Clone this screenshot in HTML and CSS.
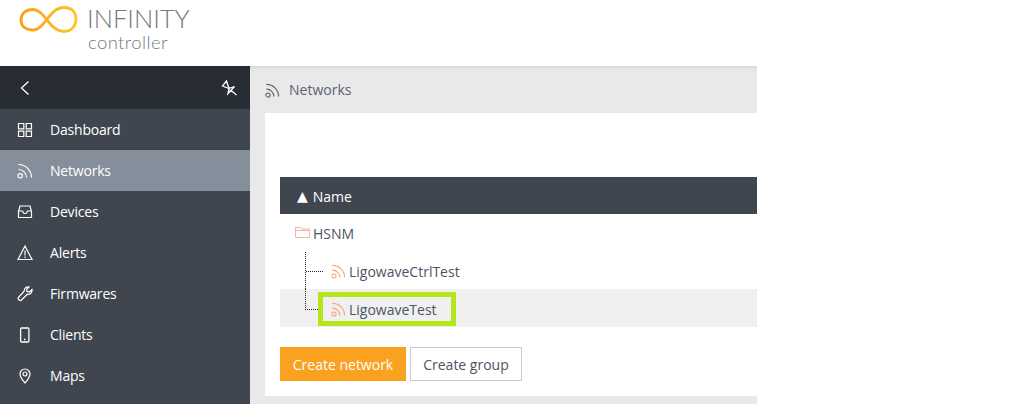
FILE: index.html
```html
<!DOCTYPE html>
<html lang="en">
<head>
<meta charset="utf-8">
<title>Infinity controller</title>
<link rel="stylesheet" href="styles.css">
</head>
<body>
<svg class="defs" width="0" height="0" aria-hidden="true">
  <defs>
    <symbol id="rss" viewBox="0 0 16 16">
      <circle cx="3.200" cy="12.800" r="2.200" fill="none" stroke="currentColor" stroke-width="1.200"/>
      <path d="M1.500 6.500A8 8 0 0 1 9.500 14.500M1.500 1.500A13 13 0 0 1 14.500 14.500" fill="none" stroke="currentColor" stroke-width="1.200"/>
    </symbol>
  </defs>
</svg>
<header class="topbar">
  <svg class="logo-mark" width="60" height="28" viewBox="0 0 60 28">
    <defs>
      <linearGradient id="lg" x1="0" x2="1" y1="0" y2="0">
        <stop offset="0" stop-color="#f8a01e"/>
        <stop offset="1" stop-color="#fdc62c"/>
      </linearGradient>
    </defs>
    <path d="M14 4.500C6 4.500 2 9 2 15S6 25 14 25C26 25 30 2.500 45 2.500C53 2.500 57 7.500 57 14S53 26.500 45 26.500C30 26.500 26 4.500 14 4.500Z" fill="none" stroke="url(#lg)" stroke-width="2.800"/>
  </svg>
  <div class="brand">
    <div class="brand-name">INFINITY</div>
    <div class="brand-sub">controller</div>
  </div>
</header>
<div class="app">
  <nav class="sidebar">
    <div class="side-head">
      <svg width="12" height="16" viewBox="0 0 12 16"><path d="M9.500 1.500 2.500 8l7 6.500" fill="none" stroke="#fff" stroke-width="1.300"/></svg>
      <svg width="16" height="16" viewBox="0 0 16 16"><path d="M5.500 1 1.500 6 8 8.500ZM8 8.500 7 13.500 13.500 6.500ZM9.500 10 15.500 15" fill="none" stroke="#fff" stroke-width="1.300"/></svg>
    </div>
    <a class="nav-item">
      <svg class="nav-icon" width="16" height="16" viewBox="0 0 16 16"><path d="M1.500 1.500h5.300v5.300H1.500zM9.200 1.500h5.300v5.300H9.200zM1.500 9.200h5.300v5.300H1.500zM9.200 9.200h5.300v5.300H9.200z" fill="none" stroke="#fff" stroke-width="1.200"/></svg>
      <span>Dashboard</span>
    </a>
    <a class="nav-item active">
      <svg class="nav-icon" width="16" height="16"><use href="#rss"/></svg>
      <span>Networks</span>
    </a>
    <a class="nav-item">
      <svg class="nav-icon" width="16" height="16" viewBox="0 0 16 16"><path d="M1.500 7.500 3 2h10l1.500 5.500v6h-13ZM1.500 7h4l1.500 2.500h2L10.500 7h4" fill="none" stroke="#fff" stroke-width="1.200"/></svg>
      <span>Devices</span>
    </a>
    <a class="nav-item">
      <svg class="nav-icon" width="16" height="16" viewBox="0 0 16 16"><path d="M8 1 15 14.500H1ZM8 5.500v5M8 11.500v1.500" fill="none" stroke="#fff" stroke-width="1.200"/></svg>
      <span>Alerts</span>
    </a>
    <a class="nav-item">
      <svg class="nav-icon" width="16" height="16" viewBox="0 0 16 16"><path d="M15 3.500 12.300 6 10 5.400 9.500 3.200 12 1C9.500.3 7 2 7.200 5.200L1.400 11.500C.4 12.800 2.800 15.300 4.200 14.200L10.300 8.200C13 8.800 15.500 6.500 15 3.500Z" fill="none" stroke="#fff" stroke-width="1.200"/></svg>
      <span>Firmwares</span>
    </a>
    <a class="nav-item">
      <svg class="nav-icon" width="16" height="16" viewBox="0 0 16 16"><rect x="3.600" y="1" width="8.300" height="14" rx="1" fill="none" stroke="#fff" stroke-width="1.300"/><path d="M7.000 12.500h1.500" stroke="#fff" stroke-width="1.300"/></svg>
      <span>Clients</span>
    </a>
    <a class="nav-item">
      <svg class="nav-icon" width="16" height="16" viewBox="0 0 16 16"><path d="M8 15C5.500 11.800 3 9.500 3 6A5 5 0 0 1 13 6C13 9.500 10.500 11.800 8 15Z" fill="none" stroke="#fff" stroke-width="1.200"/><circle cx="8" cy="6" r="2" fill="none" stroke="#fff" stroke-width="1.200"/></svg>
      <span>Maps</span>
    </a>
  </nav>
  <main class="content">
    <div class="crumb">
      <svg class="crumb-icon" width="15" height="15"><use href="#rss"/></svg>
      <span>Networks</span>
    </div>
    <section class="card">
      <div class="table-head"><span class="sort-mark">▲</span><span>Name</span></div>
      <div class="row row-group">
        <svg class="folder" width="15" height="13" viewBox="0 0 15 13"><path d="M.5 11.500V1.500h5l1.200 1.500h7.800v8.500ZM.5 4.500h14" fill="none" stroke="#f7b39b" stroke-width="1"/></svg>
        <span>HSNM</span>
      </div>
      <div class="row row-child">
        <span class="branch branch-first"></span>
        <span class="label">
          <svg class="net-icon" width="15" height="15"><use href="#rss"/></svg>
          <span>LigowaveCtrlTest</span>
        </span>
      </div>
      <div class="row row-child row-selected">
        <span class="branch branch-last"></span>
        <span class="label label-marked">
          <svg class="net-icon" width="15" height="15"><use href="#rss"/></svg>
          <span>LigowaveTest</span>
        </span>
      </div>
      <div class="actions">
        <button class="btn btn-primary">Create network</button>
        <button class="btn btn-outline">Create group</button>
      </div>
    </section>
  </main>
</div>
</body>
</html>
```

FILE: styles.css
```css
* { box-sizing: border-box; }
html, body { margin: 0; height: 100%; overflow: hidden; background: #fff; }
body { font-family: "Open Sans", "Liberation Sans", sans-serif; font-size: 14px; color: #4c5564; }
.defs { position: absolute; }

.topbar { height: 66px; display: flex; align-items: flex-start; padding: 5px 0 0 19px; }
.logo-mark { flex: none; }
.brand { margin-left: 8px; color: #76787b; font-family: Lato, "Open Sans", sans-serif; font-weight: 300; }
.brand-name { font-size: 25.500px; line-height: 28px; margin-top: -1px; }
.brand-sub { font-size: 18.500px; line-height: 22px; margin-left: 1px; margin-top: -1px; letter-spacing: .4px; }

.app { display: flex; height: 338px; width: 757px; }
.sidebar { width: 250px; flex: none; background: #40464f; color: #fff; }
.side-head { height: 43px; background: #282c34; display: flex; align-items: center; justify-content: space-between; padding: 0 13px 0 19px; }
.nav-item { height: 41px; display: flex; align-items: center; padding-left: 17px; gap: 17px; letter-spacing: -.2px; }
.nav-item.active { background: #858e9b; }
.nav-icon { flex: none; }

.content { flex: 1; min-width: 0; background: #e9e9e9; display: flex; flex-direction: column; padding: 0 0 8px 15px; box-shadow: inset 0 5px 5px -4px rgba(0,0,0,.12); }
.crumb { height: 47px; flex: none; display: flex; align-items: center; gap: 9px; color: #5a6371; }
.crumb-icon { margin-top: 1px; }
.card { flex: 1; background: #fff; padding: 64px 0 0 15px; }

.table-head { height: 37px; background: #40464f; color: #fff; display: flex; align-items: center; padding: 1px 0 0 17px; gap: 5px; }
.sort-mark { font-family: "DejaVu Sans", sans-serif; font-size: 14px; line-height: 1; }
.row { display: flex; align-items: center; }
.row-group { height: 38px; padding-left: 15px; gap: 3px; }
.folder { flex: none; margin-top: -1px; }
.row-child { height: 37px; padding-left: 25px; }
.row-child .label { position: relative; top: 1px; }
.row-selected { height: 38px; background: #f0f0f0; align-items: flex-end; padding-bottom: 1px; }
.branch { flex: none; align-self: flex-start; position: relative; border-left: 1px dotted #222; }
.branch-first { width: 18px; height: 37px; }
.branch-first::after { content: ""; position: absolute; left: 0; top: 19px; width: 17px; border-top: 1px dotted #222; }
.branch-last { width: 13px; height: 21px; border-bottom: 1px dotted #222; }
.label { display: flex; align-items: center; gap: 3px; padding-left: 8px; }
.branch-first + .label { margin-left: -18px; padding-left: 26px; }
.row-selected .label { top: 0; }
.label-marked { border: 5px solid #b5e61d; width: 138px; height: 34px; }
.net-icon { color: #f7a77e; flex: none; }

.actions { display: flex; gap: 4px; margin-top: 20px; }
.btn { font: 14px "Open Sans", "Liberation Sans", sans-serif; height: 34px; padding: 0; }
.btn-primary { width: 126px; background: #faa21f; border: 0; color: #fff; }
.btn-outline { width: 112px; background: #fff; border: 1px solid #ccc; color: #4c5564; }
```
